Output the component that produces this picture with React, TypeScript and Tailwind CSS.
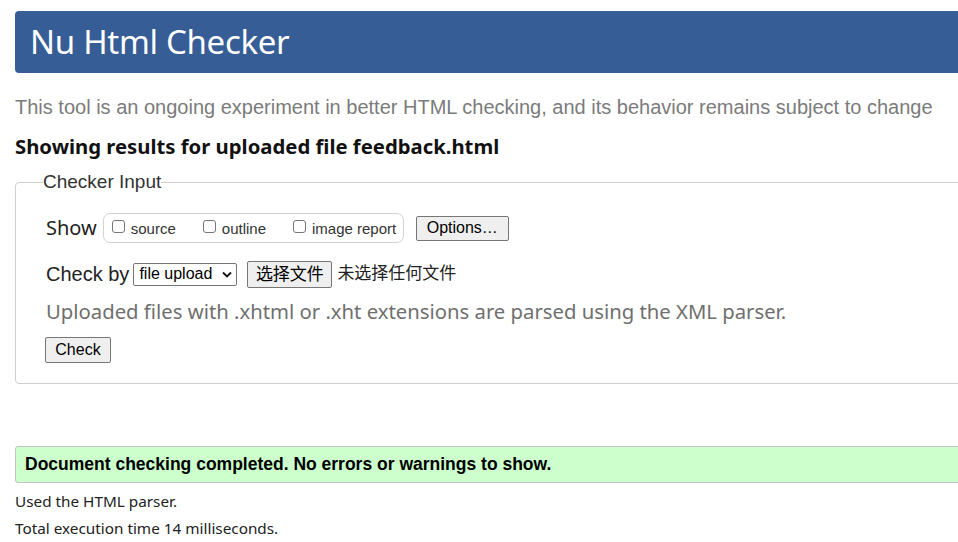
import React from "react";

const SEGOE = "font-['Noto_Sans','Open_Sans',sans-serif]";
const ARIAL = "font-['Liberation_Sans',Arial,sans-serif]";
const CJK = "font-['Liberation_Sans','Noto_Sans_CJK_SC',sans-serif]";

function Checkbox({ label }: { label: string }) {
  return (
    <label className="flex items-center">
      <span className="w-[13px] h-[13px] rounded-[3px] border border-[#767676] bg-white mt-[-4px]" />
      <span className={`${ARIAL} text-[15px] text-[#333] ml-[6px] mt-[3px]`}>{label}</span>
    </label>
  );
}

function NativeButton({ children, className = "" }: { children: React.ReactNode; className?: string }) {
  return (
    <button
      className={`bg-[#efefef] border border-[#767676] rounded-[2px] text-black leading-none flex items-center justify-center ${className}`}
    >
      {children}
    </button>
  );
}

export default function App() {
  return (
    <div className="w-[958px] h-[542px] overflow-hidden bg-white">
      <div className="w-[1000px] pl-[15px]">
        <header className="mt-[11px] h-[62px] bg-[#365d95] rounded-[4px] flex items-center pl-[15px]">
          <h1 className={`${SEGOE} text-white text-[33px] tracking-[-0.3px]`}>Nu Html Checker</h1>
        </header>

        <p className={`${ARIAL} text-[20px] leading-[24px] text-[#7b7b7b] mt-[22px]`}>
          This tool is an ongoing experiment in better HTML checking, and its behavior remains subject to change
        </p>

        <h2 className={`${SEGOE} font-bold text-[20.3px] leading-[26px] text-[#111] mt-[14px]`}>
          Showing results for uploaded file feedback.html
        </h2>

        <fieldset className="mt-[12px] border border-[#cfcfcf] rounded-[4px] pl-[30px] pb-[20px]">
          <legend className={`${ARIAL} text-[19px] text-[#333] -ml-[3px] px-0 leading-[22px]`}>Checker Input</legend>

          <div className="flex items-center mt-[20px] h-[30px]">
            <span className={`${SEGOE} text-[20px] text-[#222]`}>Show</span>
            <div className="ml-[6px] h-[30px] w-[301px] border border-[#d3d3d3] rounded-[7px] flex items-center pl-[8px] gap-[27px]">
              <Checkbox label="source" />
              <Checkbox label="outline" />
              <Checkbox label="image report" />
            </div>
            <NativeButton className={`${ARIAL} ml-[12px] h-[25px] w-[93px] text-[16px]`}>Options…</NativeButton>
          </div>

          <div className="flex items-center mt-[17px] h-[28px]">
            <span className={`${ARIAL} text-[20px] text-[#222]`}>Check by</span>
            <div className={`${ARIAL} ml-[4px] h-[23px] w-[104px] border border-[#767676] rounded-[2px] flex items-center pl-[5px] pr-[4px] text-[16px] text-black justify-between`}>
              <span>file upload</span>
              <svg width="10" height="7" viewBox="0 0 10 7" className="mt-[1px]">
                <path d="M1 1.5 L5 5.5 L9 1.5" fill="none" stroke="#111" strokeWidth="1.8" />
              </svg>
            </div>
            <NativeButton className={`${CJK} ml-[10px] h-[27px] w-[85px] text-[17px]`}>选择文件</NativeButton>
            <span className={`${CJK} ml-[5px] text-[17px] text-[#222]`}>未选择任何文件</span>
          </div>

          <p className={`${SEGOE} text-[20.3px] leading-[26px] text-[#6f6f6f] mt-[10px]`}>
            Uploaded files with .xhtml or .xht extensions are parsed using the XML parser.
          </p>

          <NativeButton className={`${ARIAL} mt-[13px] -ml-[1px] h-[26px] w-[66px] text-[16px]`}>Check</NativeButton>
        </fieldset>

        <div className="mt-[62px] h-[37px] bg-[#ccffcc] border border-[#c3c3c3] rounded-[3px] flex items-center pl-[9px]">
          <span className={`${ARIAL} font-bold text-[17.5px] text-black`}>
            Document checking completed. No errors or warnings to show.
          </span>
        </div>

        <p className={`${SEGOE} text-[15.3px] leading-[20px] text-[#222] mt-[8px]`}>Used the HTML parser.</p>
        <p className={`${SEGOE} text-[15.3px] leading-[20px] text-[#222] mt-[7px]`}>Total execution time 14 milliseconds.</p>
      </div>
    </div>
  );
}
